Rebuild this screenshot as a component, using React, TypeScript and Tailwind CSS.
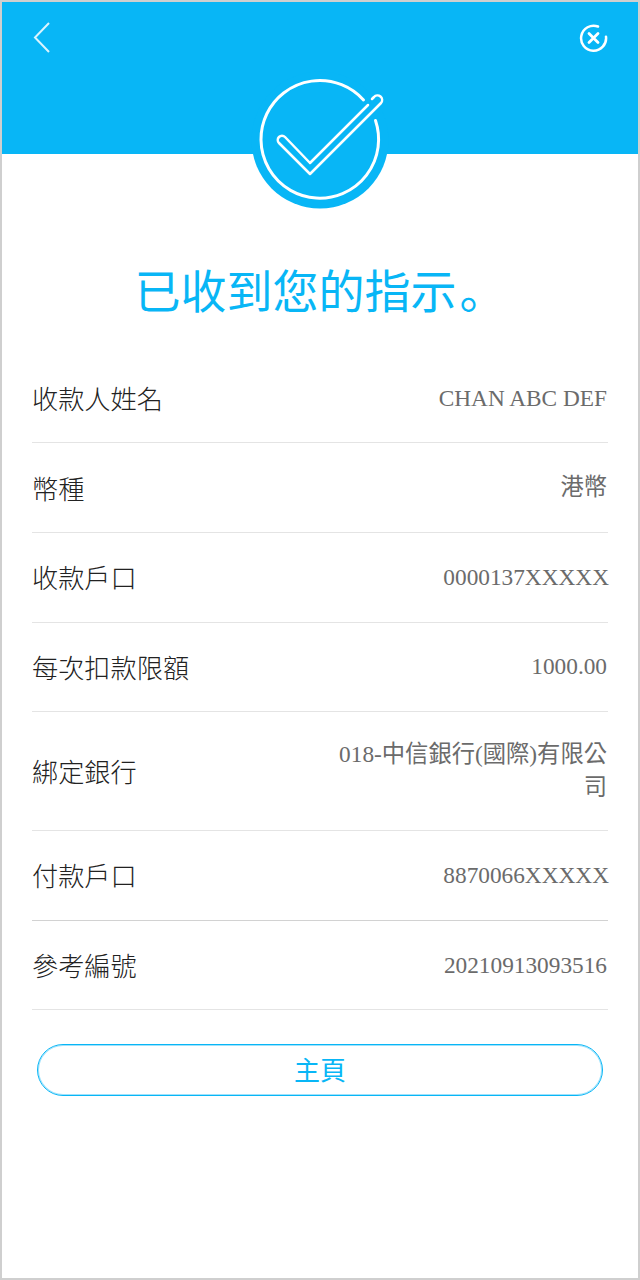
const CJK = '"Noto Sans CJK TC", "Liberation Sans", sans-serif';

const rows = [
  { label: "收款人姓名", value: "CHAN ABC DEF" },
  { label: "幣種", value: "港幣" },
  { label: "收款戶口", value: "0000137XXXXX", masked: true },
  { label: "每次扣款限額", value: "1000.00" },
  { label: "綁定銀行", value: "018-中信銀行(國際)有限公司", tall: true },
  { label: "付款戶口", value: "8870066XXXXX", masked: true, dark: true },
  { label: "參考編號", value: "20210913093516" },
];

function SuccessBadge() {
  return (
    <svg viewBox="0 0 140 140" className="absolute left-[248px] top-[68px] h-[140px] w-[140px]">
      <circle cx="70" cy="70" r="68.500" fill="#08b6f6" />
      <path
        d="M113.500 30 A58.800 58.800 0 1 0 125.500 50.500"
        fill="none"
        stroke="#fff"
        strokeWidth="3"
        strokeLinecap="round"
      />
      <path
        d="M118 35 L60 93 L35 67 A4 4 0 0 0 29 73 L60 104 L131 33 A4 4 0 0 0 124 27 L122 29"
        fill="none"
        stroke="#fff"
        strokeWidth="2.500"
        strokeLinecap="round"
        strokeLinejoin="round"
      />
    </svg>
  );
}

export default function App() {
  return (
    <div className="h-[1280px] w-[640px] border-2 border-[#cfcfcf] bg-white" style={{ fontFamily: CJK }}>
      <header className="relative h-[152px] bg-[#08b6f6]">
        <svg viewBox="0 0 20 34" className="absolute left-[30px] top-[18px] h-[34px] w-[20px]">
          <path d="M17 3 L3 17.500 L17 32" fill="none" stroke="#fff" strokeOpacity="0.85" strokeWidth="2" />
        </svg>
        <svg viewBox="0 0 30 30" className="absolute left-[576px] top-[20px] h-[30px] w-[30px]">
          <path
            d="M20 4.500 A12.500 12.500 0 1 0 28 14.700"
            fill="none"
            stroke="#fff"
            strokeWidth="2.500"
            strokeLinecap="round"
          />
          <path d="M11 11.500 L20 20.500 M20 11.500 L11 20.500" stroke="#fff" strokeWidth="2.800" strokeLinecap="round" />
        </svg>
        <SuccessBadge />
      </header>

      <h1
        className="mt-[107px] h-[54px] text-center text-[46px] font-normal leading-[54px] text-[#08b6f6]"
        style={{ fontFamily: '"Noto Sans CJK SC", sans-serif' }}
      >
        已收到您的指示<span className="ml-[3px]">。</span>
      </h1>

      <dl className="mx-[30px] mt-[38.800px]">
        {rows.map((row) => (
          <div
            key={row.label}
            className={`flex items-center justify-between border-b ${row.dark ? "border-[#d2d2d2]" : "border-[#e4e4e4]"} ${row.tall ? "h-[119px]" : "h-[89.600px]"}`}
          >
            <dt className="shrink-0 text-[26.200px] font-light leading-[36px] text-[#222]">{row.label}</dt>
            <dd
              className={`w-[270px] text-right text-[23.300px] leading-[33px] text-[#6b6b6b] ${row.masked ? "mr-[-1px]" : "mr-[1px]"}`}
              style={{ fontFamily: '"Liberation Serif", "Noto Sans CJK TC", serif' }}
            >
              {row.value}
            </dd>
          </div>
        ))}
      </dl>

      <button className="mx-[35px] mt-[33.200px] block h-[52px] w-[566px] rounded-full border border-[#08b6f6] pb-[3px] text-[26px] text-[#08b6f6] shadow-[inset_0_0_0_1px_#9fe2fc]">
        主頁
      </button>
    </div>
  );
}
